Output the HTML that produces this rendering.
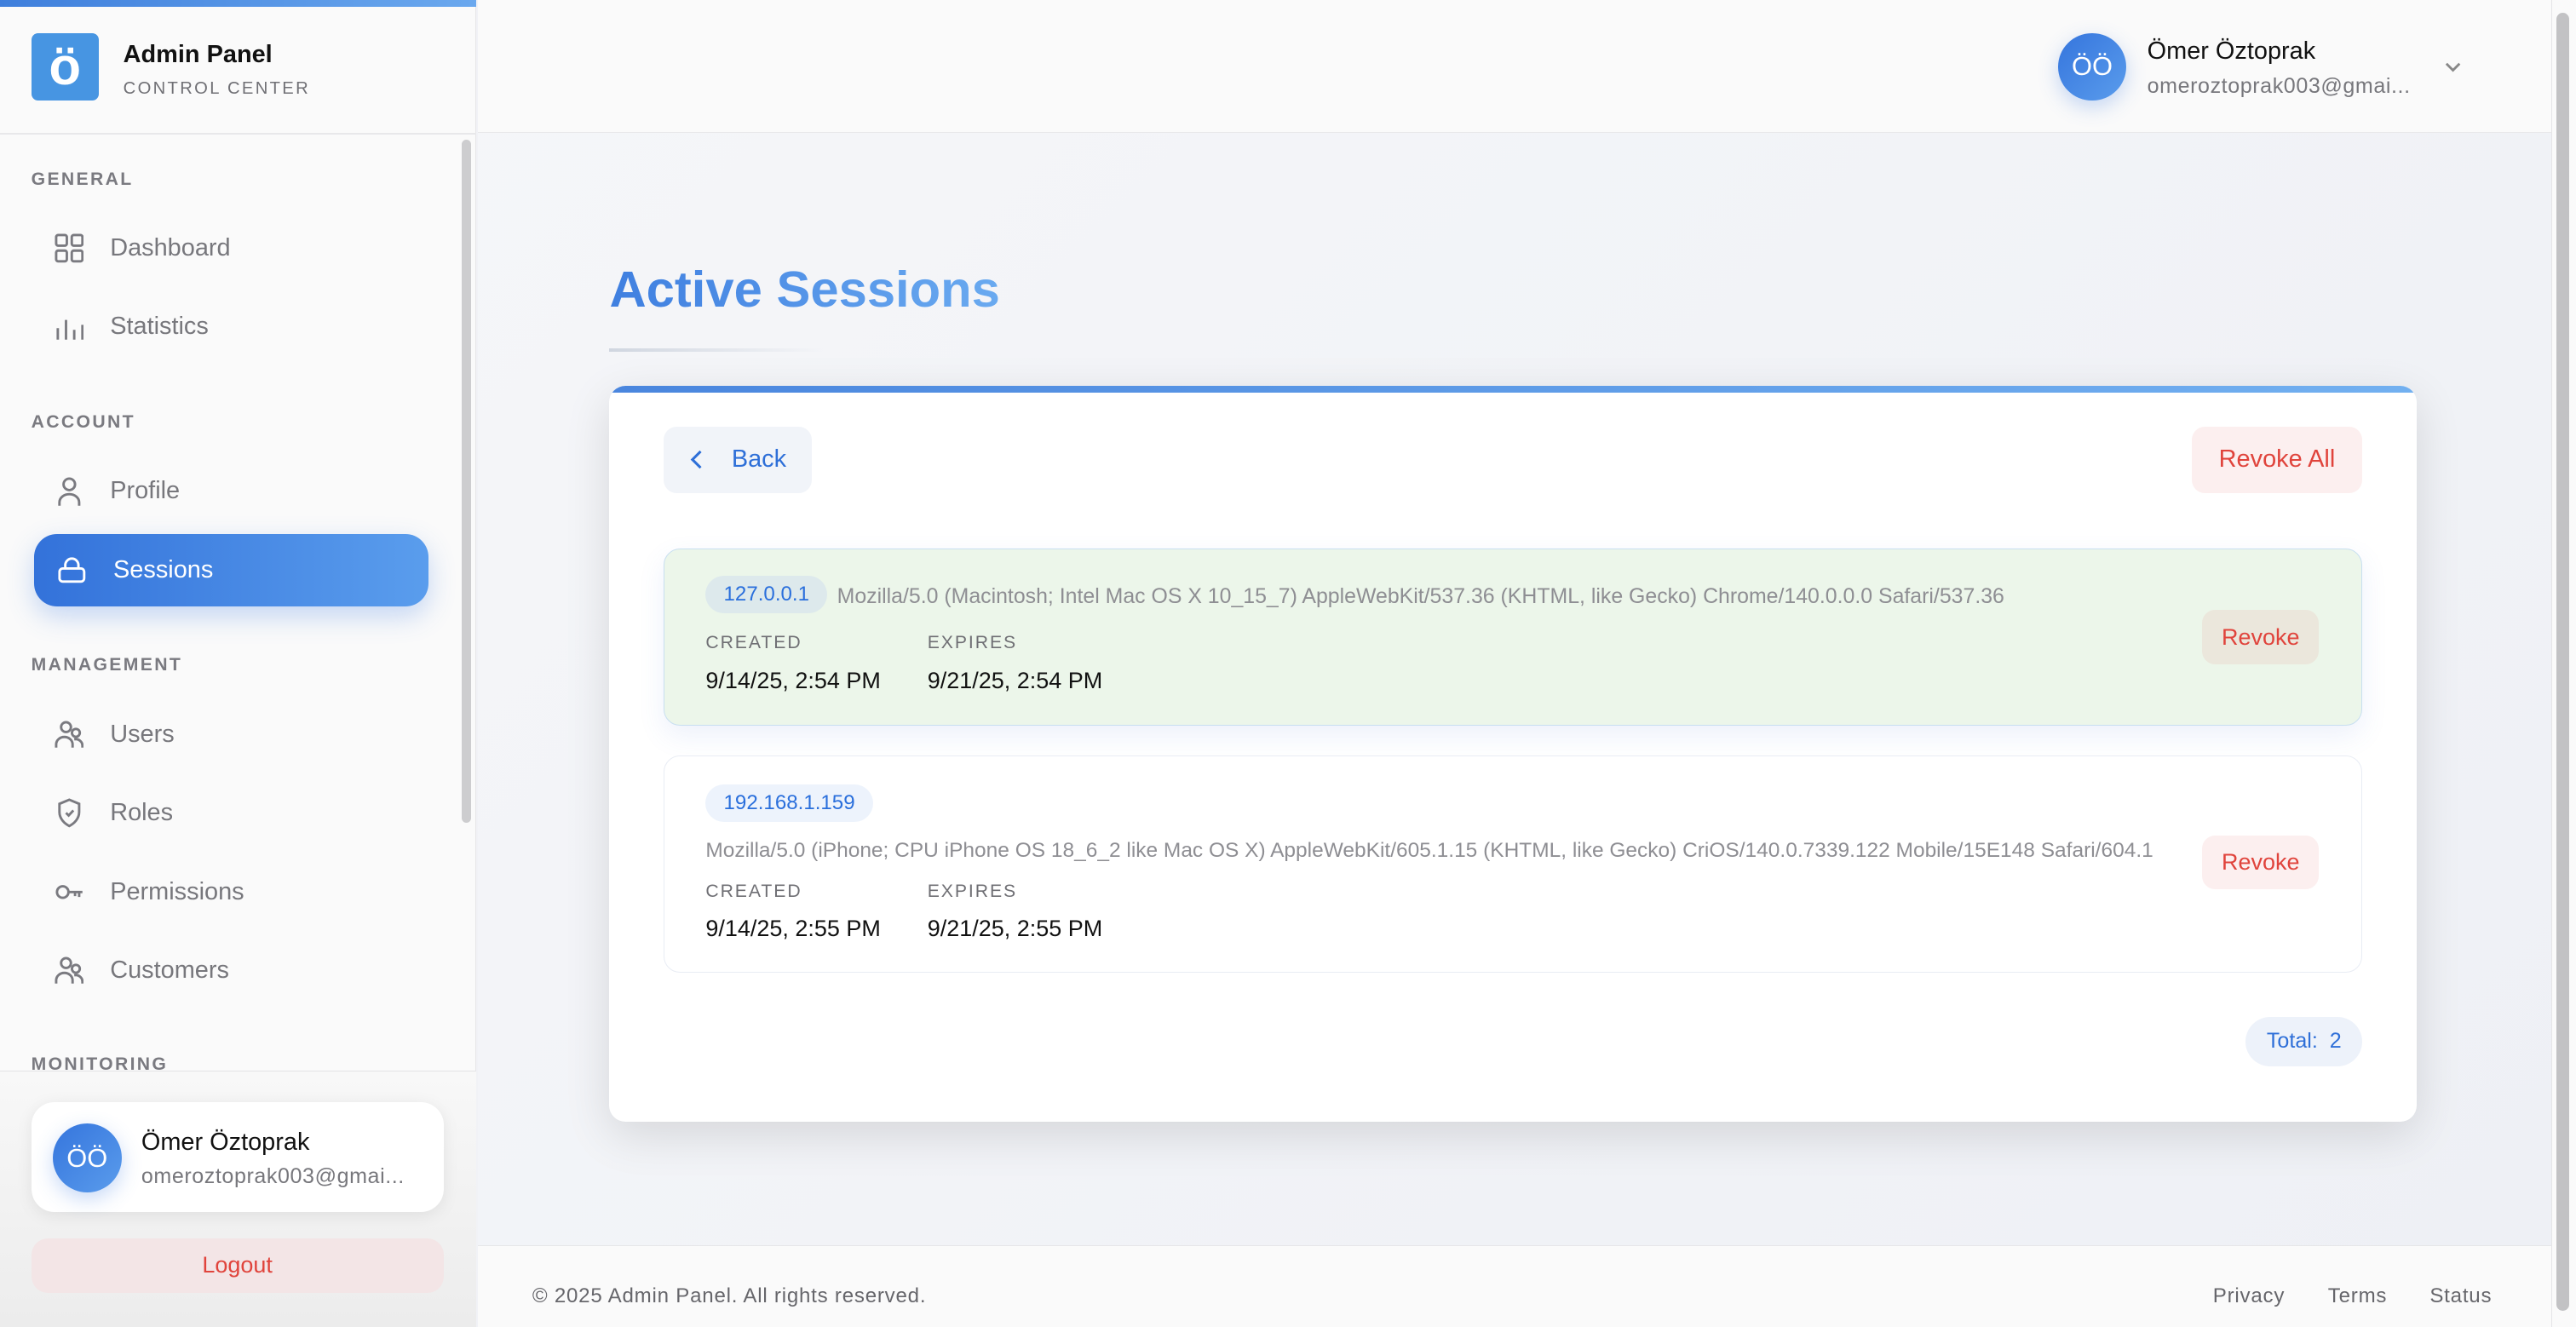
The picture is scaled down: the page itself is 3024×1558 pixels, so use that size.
<!DOCTYPE html>
<html><head><meta charset="utf-8"><style>
html{zoom:1.92857}
*{box-sizing:border-box;margin:0;padding:0}
body{width:1568px;height:808px;overflow:hidden;position:relative;font-family:"Liberation Sans",sans-serif;background:#f1f2f6;color:#1d1d1f}
.a{position:absolute}
.side{left:0;top:0;width:290px;height:808px;background:#fafafa;border-right:1px solid #e6e6e8}
.topbar{left:0;top:0;width:290px;height:4px;background:linear-gradient(90deg,#3f7fdc,#6aa8ee)}
.sec{left:19px;font-size:11px;letter-spacing:1.2px;color:#7a7a80;font-weight:bold}
.it{left:33px;height:24px;display:flex;align-items:center;font-size:15px;color:#77777c}
.it svg{width:18px;height:18px;margin-right:16px;stroke:#7a7a80;fill:none;stroke-width:1.5}
.main{left:291px;top:0;width:1262px;height:808px;background:linear-gradient(135deg,#f5f6f9,#eef0f5)}
.hdr{left:291px;top:0;width:1262px;height:81px;background:#fafafa;border-bottom:1px solid #e8e8ea}
.av{border-radius:50%;background:linear-gradient(135deg,#3575dd,#5a9cec);color:#fff;display:flex;align-items:center;justify-content:center;font-size:16px;box-shadow:0 4px 12px rgba(70,130,230,.3)}
.card{left:371px;top:235px;width:1100px;height:448px;background:#fff;border-radius:10px;box-shadow:0 8px 28px rgba(0,0,0,.12);overflow:hidden}
.btn{border-radius:8px;display:flex;align-items:center;justify-content:center;font-size:15px}
.lbl{font-size:11px;letter-spacing:1px;color:#6f6f74}
.val{font-size:14px;color:#111}
.ua{font-size:12.9px;color:#8e8e93;white-space:nowrap}
.ip{height:23px;border-radius:12px;padding:0 11px;display:flex;align-items:center;font-size:12.5px;color:#2a6fdc}
.ft{font-size:12.5px;color:#66666b;letter-spacing:.4px}
</style></head><body>
<div class="a side"></div>
<div class="a topbar"></div>
<div class="a" style="left:19px;top:20px;width:41px;height:41px;border-radius:4px;background:#4795e2;color:#fff;font-size:32px;font-weight:bold;display:flex;align-items:center;justify-content:center">ö</div>
<div class="a" style="left:75px;top:25px;font-size:15px;font-weight:bold;color:#111">Admin Panel</div>
<div class="a" style="left:75px;top:48px;font-size:10.5px;letter-spacing:1.2px;color:#707075">CONTROL CENTER</div>
<div class="a" style="left:0;top:81px;width:290px;height:1px;background:#e8e8ea"></div>
<div class="a" style="left:281px;top:85px;width:6px;height:416px;border-radius:3px;background:#cdcdcf"></div>

<div class="a sec" style="top:103px">GENERAL</div>
<div class="a it" style="top:139px"><svg viewBox="0 0 18 18"><rect x="1" y="1" width="6.5" height="6.5" rx="1.2"/><rect x="10.5" y="1" width="6.5" height="6.5" rx="1.2"/><rect x="1" y="10.5" width="6.5" height="6.5" rx="1.2"/><rect x="10.5" y="10.5" width="6.5" height="6.5" rx="1.2"/></svg>Dashboard</div>
<div class="a it" style="top:187px"><svg viewBox="0 0 18 18"><path d="M2 10v7M7 5v12M12 11v6M17 8v9"/></svg>Statistics</div>
<div class="a sec" style="top:251px">ACCOUNT</div>
<div class="a it" style="top:287px"><svg viewBox="0 0 18 18"><circle cx="9" cy="5" r="3.5"/><path d="M3 18v-2a6 5 0 0 1 12 0v2"/></svg>Profile</div>
<div class="a" style="left:21px;top:325px;width:240px;height:44px;border-radius:14px;background:linear-gradient(90deg,#3372da,#5a9ded);box-shadow:0 6px 16px rgba(70,130,230,.3)"></div>
<div class="a it" style="left:35px;top:335px;color:#fff"><svg viewBox="0 0 18 18" style="stroke:#fff"><path d="M5 8V6a4 4 0 0 1 8 0v2"/><rect x="1.5" y="8" width="15" height="8" rx="2"/></svg>Sessions</div>
<div class="a sec" style="top:399px">MANAGEMENT</div>
<div class="a it" style="top:435px"><svg viewBox="0 0 18 18"><circle cx="7" cy="4.5" r="3"/><circle cx="13" cy="8" r="2.4"/><path d="M1 17v-2a5 4.5 0 0 1 10 0v2M12 12a4 4 0 0 1 5 4v1"/></svg>Users</div>
<div class="a it" style="top:483px"><svg viewBox="0 0 18 18"><path d="M9 1l6 2.5v5c0 4-3 7-6 8.5C6 15.5 3 12.5 3 8.5v-5z"/><path d="M7 9l1.6 1.6L11.5 7.5"/></svg>Roles</div>
<div class="a it" style="top:531px"><svg viewBox="0 0 18 18"><circle cx="5" cy="9" r="3.5"/><path d="M8.5 9H17M15 9v3M12.5 9v2.5"/></svg>Permissions</div>
<div class="a it" style="top:579px"><svg viewBox="0 0 18 18"><circle cx="7" cy="4.5" r="3"/><circle cx="13" cy="8" r="2.4"/><path d="M1 17v-2a5 4.5 0 0 1 10 0v2M12 12a4 4 0 0 1 5 4v1"/></svg>Customers</div>
<div class="a sec" style="top:642px;height:10px;overflow:hidden">MONITORING</div>
<div class="a" style="left:0;top:652px;width:290px;height:156px;background:linear-gradient(#f8f8f8,#ececec);border-top:1px solid #e3e3e5"></div>
<div class="a" style="left:19px;top:671px;width:251px;height:67px;background:#fff;border-radius:14px;box-shadow:0 2px 10px rgba(0,0,0,.08)"></div>
<div class="a av" style="left:32px;top:684px;width:42px;height:42px">ÖÖ</div>
<div class="a" style="left:86px;top:687px;font-size:15px;color:#111">Ömer Öztoprak</div>
<div class="a" style="left:86px;top:709px;font-size:13px;color:#77777c;letter-spacing:.3px">omeroztoprak003@gmai...</div>
<div class="a btn" style="left:19px;top:754px;width:251px;height:33px;background:#f3e5e6;color:#e0443c;font-size:14px;border-radius:10px">Logout</div>

<div class="a main"></div>
<div class="a hdr"></div>
<div class="a av" style="left:1253px;top:20px;width:41px;height:41px">ÖÖ</div>
<div class="a" style="left:1307px;top:23px;font-size:15px;color:#111">Ömer Öztoprak</div>
<div class="a" style="left:1307px;top:45px;font-size:13px;color:#77777c;letter-spacing:.3px">omeroztoprak003@gmai...</div>
<svg class="a" style="left:1487px;top:36px" width="12" height="10" viewBox="0 0 12 10"><path d="M2 3l4 4 4-4" stroke="#888" stroke-width="1.5" fill="none"/></svg>
<div class="a" style="left:1553px;top:0;width:15px;height:808px;background:#fafafa;border-left:1px solid #e5e5e7"></div>
<div class="a" style="left:1556px;top:8px;width:8px;height:790px;border-radius:4px;background:#c2c2c4"></div>

<div class="a" style="left:371px;top:158px;font-size:31px;font-weight:bold;background:linear-gradient(90deg,#3f7fe0,#6aaaf0);-webkit-background-clip:text;color:transparent">Active Sessions</div>
<div class="a" style="left:371px;top:212px;width:130px;height:2px;background:linear-gradient(90deg,#d0d6e0,transparent)"></div>

<div class="a card">
 <div class="a" style="left:0;top:0;width:1100px;height:4px;background:linear-gradient(90deg,#4a86de,#72b0f0)"></div>
 <div class="a btn" style="left:33px;top:25px;width:90px;height:40px;background:#f1f4f9;color:#2e6fd8">
  <svg width="10" height="12" viewBox="0 0 10 12" style="margin-right:16px"><path d="M7 1L2 6l5 5" stroke="#2e6fd8" stroke-width="1.6" fill="none"/></svg>Back</div>
 <div class="a btn" style="left:963px;top:25px;width:104px;height:40px;background:#fcefef;color:#e0443c">Revoke All</div>

 <div class="a" style="left:33px;top:99px;width:1034px;height:108px;background:#ecf6ea;border:1px solid #c8dff0;border-radius:10px;box-shadow:0 6px 16px rgba(80,120,220,.1)">
  <div class="a ip" style="left:25px;top:16px;background:#dde9ec">127.0.0.1</div>
  <div class="a ua" style="left:105px;top:21px">Mozilla/5.0 (Macintosh; Intel Mac OS X 10_15_7) AppleWebKit/537.36 (KHTML, like Gecko) Chrome/140.0.0.0 Safari/537.36</div>
  <div class="a lbl" style="left:25px;top:51px">CREATED</div>
  <div class="a lbl" style="left:160px;top:51px">EXPIRES</div>
  <div class="a val" style="left:25px;top:72px">9/14/25, 2:54 PM</div>
  <div class="a val" style="left:160px;top:72px">9/21/25, 2:54 PM</div>
  <div class="a btn" style="left:936px;top:37px;width:71px;height:33px;background:#ebe7dc;color:#e0443c;font-size:14px">Revoke</div>
 </div>

 <div class="a" style="left:33px;top:225px;width:1034px;height:132px;background:#fff;border:1px solid #e8ecf4;border-radius:10px">
  <div class="a ip" style="left:25px;top:17px;background:#edf3fc">192.168.1.159</div>
  <div class="a ua" style="left:25px;top:50px;font-size:12.7px">Mozilla/5.0 (iPhone; CPU iPhone OS 18_6_2 like Mac OS X) AppleWebKit/605.1.15 (KHTML, like Gecko) CriOS/140.0.7339.122 Mobile/15E148 Safari/604.1</div>
  <div class="a lbl" style="left:25px;top:76px">CREATED</div>
  <div class="a lbl" style="left:160px;top:76px">EXPIRES</div>
  <div class="a val" style="left:25px;top:97px">9/14/25, 2:55 PM</div>
  <div class="a val" style="left:160px;top:97px">9/21/25, 2:55 PM</div>
  <div class="a btn" style="left:936px;top:48px;width:71px;height:33px;background:#fcefef;color:#e0443c;font-size:14px">Revoke</div>
 </div>
 <div class="a btn" style="left:996px;top:384px;width:71px;height:30px;border-radius:15px;background:#edf2fa;color:#2e6fd8;font-size:13px">Total:&nbsp; 2</div>
</div>

<div class="a" style="left:291px;top:758px;width:1262px;height:50px;background:#fafafa;border-top:1px solid #e6e6e8"></div>
<div class="a ft" style="left:324px;top:782px">© 2025 Admin Panel. All rights reserved.</div>
<div class="a ft" style="left:1347px;top:782px">Privacy</div>
<div class="a ft" style="left:1417px;top:782px">Terms</div>
<div class="a ft" style="left:1479px;top:782px">Status</div>
</body></html>
